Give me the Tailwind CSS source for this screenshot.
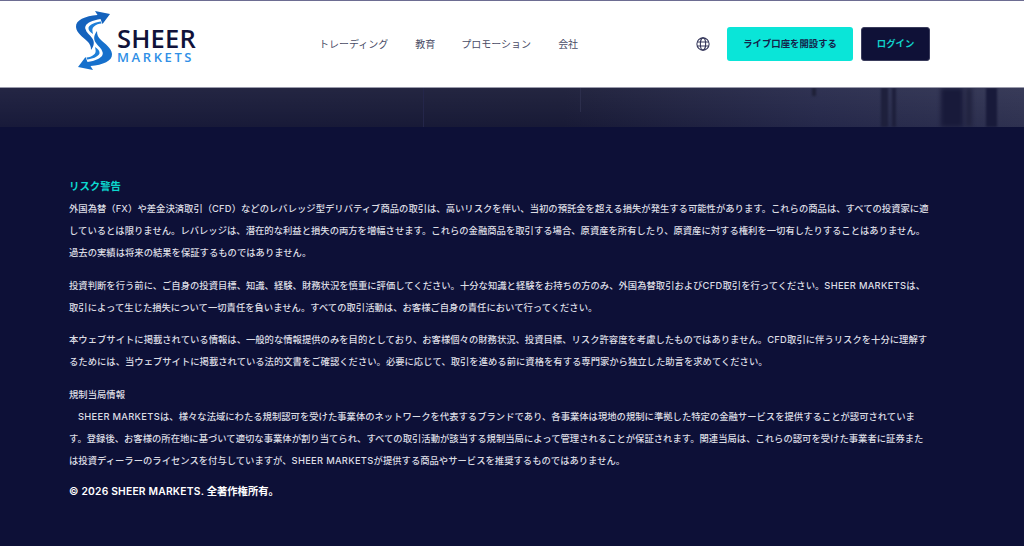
<!DOCTYPE html>
<html lang="ja">
<head>
    <meta charset="UTF-8">
    <meta name="viewport" content="width=device-width, initial-scale=1.0">
    <title>SHEER MARKETS</title>
    <script src="https://cdn.jsdelivr.net/npm/@tailwindcss/browser@4"></script>
</head>
<body class="bg-[#0d1037] font-['Inter','Noto_Sans_CJK_JP',sans-serif] overflow-hidden">
    <div class="h-[546px] w-[1024px] overflow-hidden">
        <!-- Header -->
        <header class="h-[87px] bg-white border-t border-[#6d6d92] flex items-center">
            <div class="w-[72px] shrink-0"></div>
            <div class="w-[127px] shrink-0 flex items-center">
                <svg class="w-[46px] h-[66px] shrink-0 mb-[6px] -mr-[1px]" viewBox="0 0 46 66">
                    <path d="M38 6 L23 3 L25.5 7 C13 8 3.5 12 4 19 C4.500 25 11 29 15 33 C18 36 19 38 19 42 C22 38 23 34 20 30 C17 26 14 24 14 22 C12 19 14 16 18 14 C21 12.500 25 11.500 28.500 11 L30.5 16 Z" fill="#1462bd"/>
                    <path d="M29 13.500 C24 14 18 16 16.500 19.500 C16 22 18 24 21 26 C20 22 20 20 22 18.500 C24 16.500 27 15.500 29.500 15.500 Z" fill="#1e7fd8"/>
                    <g transform="rotate(180 22 32.5)">
                        <path d="M38 6 L23 3 L25.5 7 C13 8 3.5 12 4 19 C4.500 25 11 29 15 33 C18 36 19 38 19 42 C22 38 23 34 20 30 C17 26 14 24 14 22 C12 19 14 16 18 14 C21 12.500 25 11.500 28.500 11 L30.5 16 Z" fill="#1670cc"/>
                        <path d="M29 13.500 C24 14 18 16 16.500 19.500 C16 22 18 24 21 26 C20 22 20 20 22 18.500 C24 16.500 27 15.500 29.500 15.500 Z" fill="#1e7fd8"/>
                    </g>
                </svg>
                <div class="mt-[2px]">
                    <div class="text-[#10123a] text-[25.5px] leading-[25px] font-semibold tracking-[0.2px] font-['Open_Sans',sans-serif]">SHEER</div>
                    <div class="text-[#2f8fe6] text-[13px] leading-[13px] font-semibold tracking-[2.6px] font-['Open_Sans',sans-serif]">MARKETS</div>
                </div>
            </div>
            <nav class="flex items-center text-[10px] text-[#4a4c66] ml-[120px] font-normal">
                <a class="mr-[27px]">トレーディング</a>
                <a class="mr-[26px]">教育</a>
                <a class="mr-[27px]">プロモーション</a>
                <a>会社</a>
            </nav>
            <svg class="ml-[118px] w-[14px] h-[14px] shrink-0" viewBox="0 0 24 24" fill="none" stroke="#34365a" stroke-width="1.8">
                <circle cx="12" cy="12" r="10.5"/>
                <ellipse cx="12" cy="12" rx="4.5" ry="10.5"/>
                <path d="M2 8.5h20M2 15.5h20"/>
            </svg>
            <button class="ml-[17px] w-[126px] h-[34px] rounded-[3px] bg-[#0ae5d8] text-[#14224a] text-[9.4px] font-bold">ライブ口座を開設する</button>
            <button class="ml-[8px] w-[69px] h-[34px] rounded-[3px] bg-[#0f1137] border border-[#3a3c5c] text-[#0fd3cb] text-[9.4px] font-bold">ログイン</button>
        </header>

        <!-- Hero strip -->
        <div class="relative h-[40px] overflow-hidden border-t border-[#9a9bac] bg-[linear-gradient(90deg,#181a3a_0%,#181a36_55%,#25284a_80%,#2e3150_100%)]">
            <div class="absolute inset-0 bg-[linear-gradient(180deg,rgba(255,255,255,0.05),rgba(255,255,255,0))]"></div>
            <div class="absolute left-[423px] top-0 h-full w-px bg-[#24264a]"></div>
            <div class="absolute left-[580px] top-0 h-[24px] w-px bg-[#2c2e4c]"></div>
            <div class="absolute left-[812px] top-0 h-[8px] w-[4px] bg-[#1f2138] blur-[1px]"></div>
            <div class="absolute left-[881px] top-0 h-full w-[7px] bg-[#1e203c] blur-[1px]"></div>
            <div class="absolute left-[892px] top-0 h-full w-[4px] bg-[#1e203c] blur-[1px]"></div>
            <div class="absolute left-[941px] top-0 h-full w-[22px] bg-[#181a3a] blur-[2px]"></div>
            <div class="absolute left-[966px] top-0 h-full w-[6px] bg-[#20223f] blur-[2px]"></div>
            <div class="absolute left-[986px] top-0 h-full w-[11px] bg-[#181a3a] blur-[1px]"></div>
        </div>

        <!-- Risk text -->
        <main class="pl-[69px] pt-[52px] w-[930px]">
            <h2 class="text-[#0cd8cf] text-[10.4px] leading-[16px] font-bold">リスク警告</h2>
            <div class="mt-[3px] text-[#dcdde4] text-[9.33px] leading-[22.2px] font-medium">
                <p>外国為替（<span class="tracking-[0.2px]">FX</span>）や差金決済取引（<span class="tracking-[0.2px]">CFD</span>）などのレバレッジ型デリバティブ商品の取引は、高いリスクを伴い、当初の預託金を超える損失が発生する可能性があります。これらの商品は、すべての投資家に適しているとは限りません。レバレッジは、潜在的な利益と損失の両方を増幅させます。これらの金融商品を取引する場合、原資産を所有したり、原資産に対する権利を一切有したりすることはありません。過去の実績は将来の結果を保証するものではありません。</p>
                <p class="mt-[10px]">投資判断を行う前に、ご自身の投資目標、知識、経験、財務状況を慎重に評価してください。十分な知識と経験をお持ちの方のみ、外国為替取引および<span class="tracking-[0.3px]">CFD</span>取引を行ってください。<span class="tracking-[0.3px]">SHEER MARKETS</span>は、取引によって生じた損失について一切責任を負いません。すべての取引活動は、お客様ご自身の責任において行ってください。</p>
                <p class="mt-[10px]">本ウェブサイトに掲載されている情報は、一般的な情報提供のみを目的としており、お客様個々の財務状況、投資目標、リスク許容度を考慮したものではありません。<span class="tracking-[0.3px]">CFD</span>取引に伴うリスクを十分に理解するためには、当ウェブサイトに掲載されている法的文書をご確認ください。必要に応じて、取引を進める前に資格を有する専門家から独立した助言を求めてください。</p>
                <p class="mt-[10.5px]">規制当局情報</p>
                <p class="indent-[9px] leading-[21.8px]"><span class="tracking-[0.3px]">SHEER MARKETS</span>は、様々な法域にわたる規制認可を受けた事業体のネットワークを代表するブランドであり、各事業体は現地の規制に準拠した特定の金融サービスを提供することが認可されています。登録後、お客様の所在地に基づいて適切な事業体が割り当てられ、すべての取引活動が該当する規制当局によって管理されることが保証されます。関連当局は、これらの認可を受けた事業者に証券または投資ディーラーのライセンスを付与していますが、<span class="tracking-[0.3px]">SHEER MARKETS</span>が提供する商品やサービスを推奨するものではありません。</p>
            </div>
            <p class="mt-[11px] text-white text-[10.3px] leading-[16px] font-semibold"><span class="tracking-[0.2px]">© 2026 SHEER MARKETS.</span> 全著作権所有。</p>
        </main>
    </div>
</body>
</html>
